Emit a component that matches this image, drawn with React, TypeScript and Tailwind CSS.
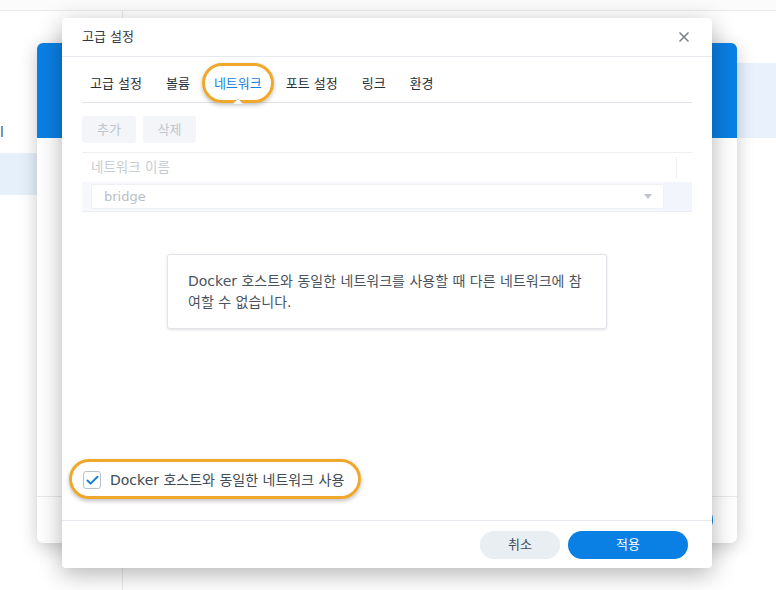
import { Check, X } from 'lucide-react';

const tabs = ['고급 설정', '볼륨', '네트워크', '포트 설정', '링크', '환경'];

function BackgroundApp() {
  return (
    <div className="flex h-full flex-col">
      <div className="h-[11px] border-b border-[#e7e9ec] bg-[#fbfbfc]" />
      <div className="flex flex-1">
        <aside className="w-[123px] border-r border-[#e7e9ec]">
          <div className="mt-[111px] h-[20px] pl-0 text-[14px] leading-[20px] text-[#555]">l</div>
          <div className="mt-[11px] h-[42px] bg-[#e6f0fb]" />
        </aside>
        <main className="flex-1">
          <div className="mt-[52px] h-[75px] bg-[#e8f1fc]" />
        </main>
      </div>
    </div>
  );
}

function MiddleDialog() {
  return (
    <div className="absolute top-[43px] left-[37px] flex h-[500px] w-[700px] flex-col overflow-hidden rounded-[6px] bg-white shadow-[0_4px_18px_rgba(0,0,0,0.22)]">
      <div className="h-[95px] bg-[#0a7fe4]" />
      <div className="flex-1" />
      <div className="flex h-[47px] items-center justify-end border-t border-[#e7e9ec] pr-[24px]">
        <div className="h-[28px] w-[120px] rounded-full bg-[#0a7fe4]" />
      </div>
    </div>
  );
}

function Tabs() {
  return (
    <div className="flex h-[46px] gap-6 border-b border-[#dfe3e8] pt-[18px] pl-2">
      {tabs.map((tab) =>
        tab === '네트워크' ? (
          <span
            key={tab}
            className="relative h-[18px] text-[13px] leading-[18px] text-[#1580dc]"
          >
            <span className="pointer-events-none absolute -top-[12px] -right-[12px] -bottom-[10px] -left-[12px] rounded-full border-[3px] border-[#efa82a] shadow-[0_2px_4px_rgba(0,0,0,0.25)]" />
            {tab}
            <svg
              className="absolute -bottom-[11px] left-1/2 -translate-x-1/2"
              width="10"
              height="5"
              viewBox="0 0 10 5"
            >
              <path d="M0 5 L5 0 L10 5" fill="#fff" stroke="#d9dde2" strokeWidth="1" />
            </svg>
          </span>
        ) : (
          <span key={tab} className="h-[18px] text-[13px] leading-[18px] text-[#262e37]">
            {tab}
          </span>
        ),
      )}
    </div>
  );
}

function NetworkTable() {
  return (
    <div className="mt-[9px] border-t border-[#eceef1]">
      <div className="flex h-[29px]">
        <div className="flex w-[594px] items-center pl-[9px] text-[13.5px] text-[#c8cdd3]">네트워크 이름</div>
        <div className="my-[4px] w-px bg-[#eceef1]" />
        <div className="flex-1" />
      </div>
      <div className="flex h-[30px] items-center border-b border-[#eceef1] bg-[#f6f8fb] pl-[9px]">
        <div className="flex h-[25px] w-[573px] items-center justify-between rounded-[2px] border border-[#eef0f3] bg-white pr-[11px] pl-[12px] text-[13px] text-[#b8bec5]">
          bridge
          <svg width="8" height="5" viewBox="0 0 8 5">
            <path d="M0 0 H8 L4 5 Z" fill="#bfc4ca" />
          </svg>
        </div>
        <div className="h-full flex-1 bg-[#f2f6fc]" />
      </div>
    </div>
  );
}

export default function App() {
  return (
    <div
      className="relative h-[590px] w-[776px] overflow-hidden bg-white"
      style={{ fontFamily: '"DejaVu Sans", "Noto Sans CJK KR", sans-serif' }}
    >
      <BackgroundApp />
      <MiddleDialog />

      <div className="absolute top-[18px] left-[62px] flex h-[550px] w-[650px] flex-col rounded-[4px] bg-white shadow-[0_6px_24px_rgba(0,0,0,0.3)]">
        <header className="flex h-[39px] shrink-0 items-center justify-between border-b border-[#e5e8ec] pr-[20px] pl-[20px]">
          <span className="text-[13px] text-[#2f3740]">고급 설정</span>
          <X aria-hidden className="size-[16px] text-[#80868c]" strokeWidth={2.6} />
        </header>

        <div className="flex flex-1 flex-col px-5">
          <Tabs />

          <div className="mt-[13px] flex gap-[7px]">
            <button className="h-[27px] w-[54px] rounded-[3px] bg-[#f3f5f8] text-[13px] text-[#c0c6cd]">추가</button>
            <button className="h-[27px] w-[53px] rounded-[3px] bg-[#f3f5f8] text-[13px] text-[#c0c6cd]">삭제</button>
          </div>

          <NetworkTable />

          <div className="mt-[42px] h-[75px] w-[440px] self-center rounded-[3px] border border-[#e1e4e8] bg-white px-5 pt-[16px] text-[14px] leading-[21px] whitespace-nowrap text-[#4a535d] shadow-[0_1px_3px_rgba(0,0,0,0.12)]">
            Docker 호스트와 동일한 네트워크를 사용할 때 다른 네트워크에 참
            <br />
            여할 수 없습니다.
          </div>

          <div className="mt-auto mb-[31px] flex h-[18px] items-center pl-[1px]">
            <label className="relative flex items-center">
              <span className="pointer-events-none absolute -top-[11px] -right-[17px] -bottom-[8px] -left-[14px] rounded-full border-[3px] border-[#efa82a] shadow-[0_2px_4px_rgba(0,0,0,0.25)]" />
              <span className="flex size-[18px] items-center justify-center rounded-[3px] border border-[#b9c1ca] bg-white">
                <Check aria-hidden className="size-[15px] text-[#1580dc]" strokeWidth={3.2} />
              </span>
              <span className="ml-[9px] text-[14px] text-[#414b55]">Docker 호스트와 동일한 네트워크 사용</span>
            </label>
          </div>
        </div>

        <footer className="flex h-[48px] shrink-0 items-center justify-end gap-2 border-t border-[#e5e8ec] pr-[24px]">
          <button className="h-[28px] w-[80px] rounded-full bg-[#e9eef3] text-[13px] text-[#414b55]">취소</button>
          <button className="h-[28px] w-[120px] rounded-full bg-[#0a7fe4] text-[13px] text-white">적용</button>
        </footer>
      </div>
    </div>
  );
}
